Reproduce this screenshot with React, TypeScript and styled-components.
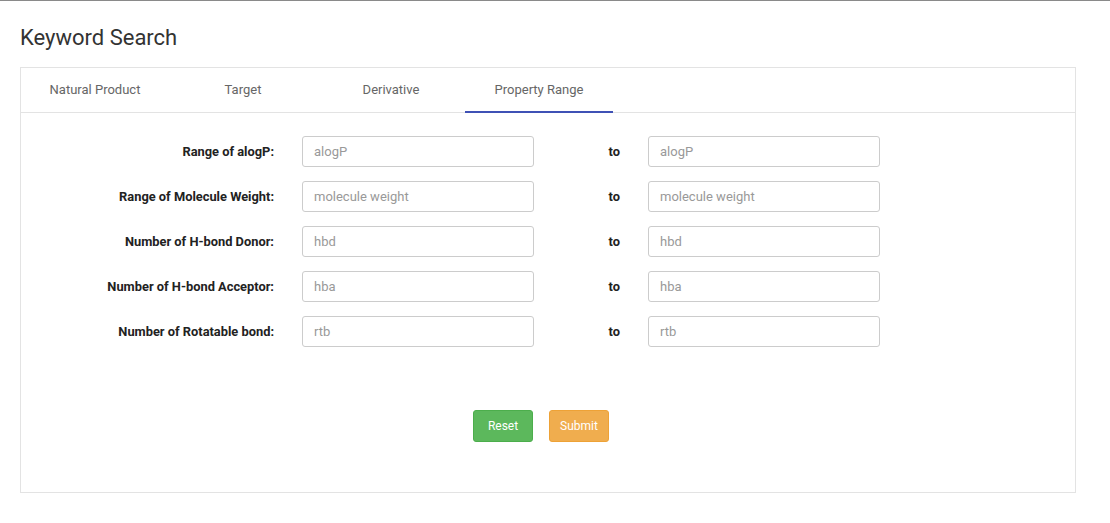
import { FC, Fragment } from "react";
import styled, { createGlobalStyle } from "styled-components";

const GlobalStyle = createGlobalStyle`
  body {
    margin: 0;
    background: #fff;
    font-family: Roboto, "Liberation Sans", Arial, sans-serif;
    color: #333;
  }
  * {
    box-sizing: border-box;
  }
`;

const Page = styled.div`
  border-top: 1px solid #8a8a8a;
  padding: 23px 34px 30px 20px;
`;
const Title = styled.h1`
  margin: 0 0 15px;
  font-size: 22px;
  font-weight: 400;
  line-height: 28px;
  color: #333;
`;
const Card = styled.section`
  border: 1px solid #e3e3e3;
  padding-bottom: 50px;
`;
const TabBar = styled.nav`
  display: flex;
  height: 45px;
  border-bottom: 1px solid #e3e3e3;
`;
const Tab = styled.div<{ active?: boolean }>`
  width: 148px;
  display: flex;
  align-items: center;
  justify-content: center;
  font-size: 13px;
  color: #666;
  border-bottom: 2px solid ${(props) => (props.active ? "#3f51b5" : "transparent")};
  margin-bottom: -1px;
  cursor: pointer;
`;
const Form = styled.form`
  display: grid;
  grid-template-columns: 253px 232px 58px 232px;
  column-gap: 28px;
  row-gap: 14px;
  padding-top: 23px;
  align-items: center;
`;
const Label = styled.label`
  text-align: right;
  font-size: 12.85px;
  font-weight: 700;
  color: #222;
`;
const Input = styled.input`
  height: 31px;
  width: 232px;
  border: 1px solid #ccc;
  border-radius: 3px;
  padding: 0 11px;
  font-family: Roboto, "Liberation Sans", Arial, sans-serif;
  font-size: 13px;
  color: #555;
  &::placeholder {
    color: #999;
  }
`;
const Actions = styled.div`
  display: flex;
  justify-content: center;
  gap: 16px;
  margin-top: 63px;
  padding-right: 14px;
`;
const Button = styled.button<{ bg: string; bd: string }>`
  width: 60px;
  height: 32px;
  border: 1px solid ${(props) => props.bd};
  border-radius: 3px;
  background: ${(props) => props.bg};
  color: #fff;
  font-family: Roboto, "Liberation Sans", Arial, sans-serif;
  font-size: 12px;
  cursor: pointer;
`;

const tabs = ["Natural Product", "Target", "Derivative", "Property Range"];

const rows = [
  { label: "Range of alogP:", hint: "alogP" },
  { label: "Range of Molecule Weight:", hint: "molecule weight" },
  { label: "Number of H-bond Donor:", hint: "hbd" },
  { label: "Number of H-bond Acceptor:", hint: "hba" },
  { label: "Number of Rotatable bond:", hint: "rtb" },
];

const App: FC = () => {
  return (
    <>
      <GlobalStyle />
      <Page>
        <Title>Keyword Search</Title>
        <Card>
          <TabBar>
            {tabs.map((t) => (
              <Tab key={t} active={t === "Property Range"}>
                {t}
              </Tab>
            ))}
          </TabBar>
          <Form onSubmit={(e) => e.preventDefault()}>
            {rows.map((r) => (
              <Fragment key={r.label}>
                <Label>{r.label}</Label>
                <Input placeholder={r.hint} />
                <Label>to</Label>
                <Input placeholder={r.hint} />
              </Fragment>
            ))}
          </Form>
          <Actions>
            <Button bg="#5cb85c" bd="#4cae4c">
              Reset
            </Button>
            <Button bg="#f0ad4e" bd="#eea236">
              Submit
            </Button>
          </Actions>
        </Card>
      </Page>
    </>
  );
};
export default App;
